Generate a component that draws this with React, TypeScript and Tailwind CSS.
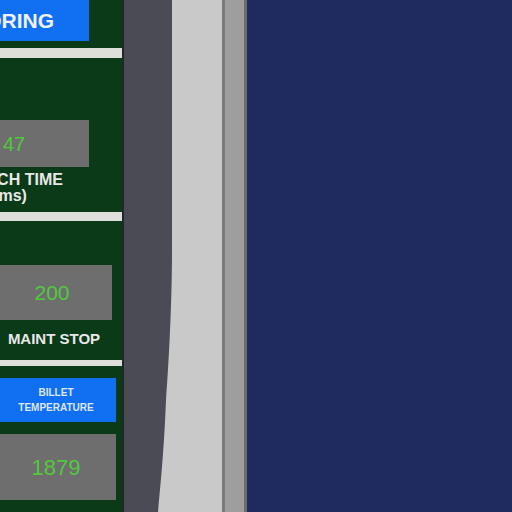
import React from 'react';

const font = { fontFamily: '"Liberation Sans", Arial, sans-serif' };

const App: React.FC = () => {
  return (
    <div className="flex h-[512px] w-[512px] overflow-hidden bg-[#1f2a5f]" style={font}>
      {/* left HMI panel, cropped */}
      <div className="flex h-full w-[122px] shrink-0 flex-col overflow-hidden bg-[#0a3a18]">
        <div className="h-[48px] shrink-0">
          <div className="ml-[-117px] flex h-[41px] w-[206px] items-center justify-center bg-[#1170f2] text-[21px] font-bold text-[#eef2fb]">
            MONITORING
          </div>
        </div>
        <div className="h-[10px] shrink-0 bg-[#dedfdb]" />

        <div className="ml-[-108px] flex h-[154px] w-[236px] shrink-0 flex-col items-center pt-[62px]">
          <div className="ml-[4px] flex h-[47px] w-[154px] items-center justify-center bg-[#6e6e6e] pl-[4px] text-[20px] text-[#52c93c]">
            47
          </div>
          <div className="mt-[5px] text-center text-[16px] font-bold leading-[16px] text-[#e8e8e8]">
            SWITCH TIME
            <br />
            (ms)
          </div>
        </div>
        <div className="h-[9px] shrink-0 bg-[#dedfdb]" />

        <div className="flex h-[139px] shrink-0 flex-col pt-[44px]">
          <div className="ml-[-8px] flex h-[55px] w-[120px] items-center justify-center bg-[#6e6e6e] text-[21px] text-[#52c93c]">
            200
          </div>
          <div className="mt-[8px] w-[108px] text-center text-[15px] font-bold text-[#e8e8e8]">MAINT STOP</div>
        </div>
        <div className="h-[6px] shrink-0 bg-[#dedfdb]" />

        <div className="flex flex-1 flex-col pt-[12px]">
          <div className="ml-[-4px] flex h-[44px] w-[120px] flex-col items-center justify-center bg-[#1170f2] text-[10px] font-bold leading-[15px] text-[#dfe6f7]">
            <span>BILLET</span>
            <span>TEMPERATURE</span>
          </div>
          <div className="ml-[-4px] mt-[12px] flex h-[66px] w-[120px] items-center justify-center bg-[#6e6e6e] text-[22px] text-[#52c93c]">
            1879
          </div>
        </div>
      </div>

      {/* bezel */}
      <div className="h-full w-[2px] shrink-0 bg-[#23262a]" />
      <div className="relative h-full w-[98px] shrink-0 bg-[#c9c9c9]">
        <svg className="absolute inset-0" width="98" height="512" viewBox="0 0 98 512">
          <path d="M0 0 H48 V250 C48 300 45 360 42 400 C40 450 37 480 34 512 H0 Z" fill="#4a4b55" />
        </svg>
      </div>
      <div className="h-full w-[3px] shrink-0 bg-[#7a7a7a]" />
      <div className="h-full w-[19px] shrink-0 bg-[#9e9e9e]" />
      <div className="h-full w-[3px] shrink-0 bg-[#6c6c6c]" />
      <div className="h-full flex-1 bg-[#1f2a5f]" />
    </div>
  );
};

export default App;
